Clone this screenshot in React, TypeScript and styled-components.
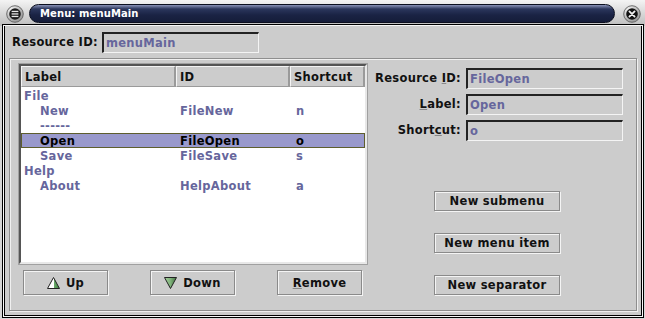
import styled, { createGlobalStyle } from "styled-components"

const GlobalStyle = createGlobalStyle`
    html, body {
        margin: 0;
        padding: 0;
        background: #cccccc;
    }
    * {
        box-sizing: border-box;
    }
`

interface MenuRow {
    label: string
    id: string
    shortcut: string
    depth: number
    selected?: boolean
}

const rows: MenuRow[] = [
    { label: "File", id: "", shortcut: "", depth: 0 },
    { label: "New", id: "FileNew", shortcut: "n", depth: 1 },
    { label: "------", id: "", shortcut: "", depth: 1 },
    { label: "Open", id: "FileOpen", shortcut: "o", depth: 1, selected: true },
    { label: "Save", id: "FileSave", shortcut: "s", depth: 1 },
    { label: "Help", id: "", shortcut: "", depth: 0 },
    { label: "About", id: "HelpAbout", shortcut: "a", depth: 1 },
]

function UpArrow() {
    return (
        <svg width="13" height="12" viewBox="0 0 13 12">
            <defs>
                <linearGradient id="upg" x1="0" x2="1" y1="0" y2="0">
                    <stop offset="0" stopColor="#ffffff" />
                    <stop offset="0.5" stopColor="#ffffff" />
                    <stop offset="0.5" stopColor="#6fae6f" />
                    <stop offset="1" stopColor="#3f7f3f" />
                </linearGradient>
            </defs>
            <polygon points="6.5,0.5 12.5,11.5 0.5,11.5" fill="url(#upg)" stroke="#222" strokeWidth="1" />
        </svg>
    )
}

function DownArrow() {
    return (
        <svg width="13" height="12" viewBox="0 0 13 12">
            <defs>
                <linearGradient id="dng" x1="0" x2="1" y1="0" y2="0">
                    <stop offset="0" stopColor="#a9d3a0" />
                    <stop offset="0.5" stopColor="#7fb27a" />
                    <stop offset="1" stopColor="#3f6f3f" />
                </linearGradient>
            </defs>
            <polygon points="0.5,0.5 12.5,0.5 6.5,11.5" fill="url(#dng)" stroke="#222" strokeWidth="1" />
        </svg>
    )
}

function MenuIcon() {
    return (
        <svg width="18" height="18" viewBox="0 0 18 18">
            <defs>
                <radialGradient id="ring" cx="0.35" cy="0.3" r="0.8">
                    <stop offset="0" stopColor="#ffffff" />
                    <stop offset="1" stopColor="#8a8a8a" />
                </radialGradient>
            </defs>
            <circle cx="9" cy="9" r="8.3" fill="url(#ring)" stroke="#555" strokeWidth="0.8" />
            <circle cx="9" cy="9" r="5.8" fill="#1a1a1a" />
            <rect x="5.6" y="5.8" width="6.8" height="1.3" fill="#e8e8e8" />
            <rect x="5.6" y="8.3" width="6.8" height="1.3" fill="#e8e8e8" />
            <rect x="5.6" y="10.8" width="6.8" height="1.3" fill="#e8e8e8" />
        </svg>
    )
}

function CloseIcon() {
    return (
        <svg width="18" height="18" viewBox="0 0 18 18">
            <defs>
                <radialGradient id="ring2" cx="0.35" cy="0.3" r="0.8">
                    <stop offset="0" stopColor="#ffffff" />
                    <stop offset="1" stopColor="#8a8a8a" />
                </radialGradient>
            </defs>
            <circle cx="9" cy="9" r="8.3" fill="url(#ring2)" stroke="#555" strokeWidth="0.8" />
            <circle cx="9" cy="9" r="5.8" fill="#111" />
            <path d="M6.4 6.4 L11.6 11.6 M11.6 6.4 L6.4 11.6" stroke="#f0f0f0" strokeWidth="1.8" strokeLinecap="round" />
        </svg>
    )
}

function App() {
    return (
        <>
            <GlobalStyle />
            <Window>
                <TitleBar>
                    <MenuIcon />
                    <TitlePill>Menu: menuMain</TitlePill>
                    <CloseIcon />
                </TitleBar>
                <Body>
                    <TopRow>
                        <Label>Resource ID:</Label>
                        <Field $width={157}>menuMain</Field>
                    </TopRow>
                    <Panel>
                        <LeftColumn>
                            <Table>
                                <HeaderRow>
                                    <HeaderCell>Label</HeaderCell>
                                    <HeaderCell>ID</HeaderCell>
                                    <HeaderCell>Shortcut</HeaderCell>
                                </HeaderRow>
                                {rows.map((row, i) => (
                                    <Row key={i} $selected={row.selected}>
                                        <Cell $indent={row.depth ? 19 : 3}>{row.label}</Cell>
                                        <Cell $indent={4}>{row.id}</Cell>
                                        <Cell $indent={6}>{row.shortcut}</Cell>
                                    </Row>
                                ))}
                            </Table>
                            <ButtonRow>
                                <Button $width={85} $height={25}>
                                    <UpArrow />
                                    <span>Up</span>
                                </Button>
                                <Button $width={85} $height={25}>
                                    <DownArrow />
                                    <span>Down</span>
                                </Button>
                                <Button $width={85} $height={25}>
                                    <span>
                                        <u>R</u>emove
                                    </span>
                                </Button>
                            </ButtonRow>
                        </LeftColumn>
                        <RightColumn>
                            <FieldGrid>
                                <FieldLabel>
                                    Resource <u>I</u>D:
                                </FieldLabel>
                                <Field $width={157}>FileOpen</Field>
                                <FieldLabel>
                                    <u>L</u>abel:
                                </FieldLabel>
                                <Field $width={157}>Open</Field>
                                <FieldLabel>
                                    Short<u>c</u>ut:
                                </FieldLabel>
                                <Field $width={157}>o</Field>
                            </FieldGrid>
                            <ActionStack>
                                <Button $width={126} $height={20}>New submenu</Button>
                                <Button $width={126} $height={20}>New menu item</Button>
                                <Button $width={126} $height={20}>New separator</Button>
                            </ActionStack>
                        </RightColumn>
                    </Panel>
                </Body>
            </Window>
        </>
    )
}

export default App

const font = `
    font-family: "DejaVu Sans", "Liberation Sans", sans-serif;
    font-weight: bold;
    font-size: 11.5px;
    letter-spacing: 0.3px;
`

const Window = styled.div`
    width: 645px;
    height: 319px;
    display: flex;
    flex-direction: column;
    background: linear-gradient(to bottom, #f4f4f4 0px, #bdbdbd 26px, #d6d6d6 26px);
    padding: 0 2px 2px 3px;
    ${font}
`

const TitleBar = styled.div`
    height: 26px;
    display: flex;
    align-items: center;
    gap: 5px;
    padding: 1px 2px 0 3px;
    flex-shrink: 0;
`

const TitlePill = styled.div`
    flex: 1;
    height: 19px;
    margin-right: 3px;
    border-radius: 10px;
    background: linear-gradient(to bottom, #8a93b8 0px, #2b365c 4px, #1a2344 10px, #141b36 19px);
    border: 1px solid #0b0f1f;
    color: #ffffff;
    font-size: 10px;
    letter-spacing: 0.1px;
    display: flex;
    align-items: center;
    padding-left: 10px;
    line-height: 1;
`

const Body = styled.div`
    flex: 1;
    display: flex;
    flex-direction: column;
    background: #cccccc;
    border: 1px solid #000;
    border-top: none;
    box-shadow: 0 0 0 1px #f8f8f8, 0 0 0 2px #000;
    margin: 0 1px 1px 1px;
    padding: 6px 4px 4px 4px;
`

const TopRow = styled.div`
    height: 20px;
    display: flex;
    align-items: center;
    gap: 4px;
    padding-left: 3px;
`

const Label = styled.span`
    color: #111;
`

const Field = styled.div<{ $width: number }>`
    width: ${(p) => p.$width}px;
    height: 21px;
    background: #cccccc;
    border-top: 2px solid #222;
    border-left: 2px solid #222;
    border-bottom: 1px solid #f4f4f4;
    border-right: 1px solid #f4f4f4;
    color: #66669c;
    display: flex;
    align-items: center;
    padding-left: 2px;
`

const Panel = styled.div`
    flex: 1;
    margin-top: 6px;
    display: flex;
    border: 1px solid #8e8e8e;
    box-shadow: inset 1px 1px 0 #f0f0f0, 1px 1px 0 #f0f0f0;
    padding: 5px 0 0 9px;
`

const LeftColumn = styled.div`
    width: 348px;
    display: flex;
    flex-direction: column;
    gap: 6px;
`

const Table = styled.div`
    height: 200px;
    background: #ffffff;
    border-top: 2px solid #555;
    border-left: 2px solid #555;
    border-right: 2px solid #e8e8e8;
    border-bottom: 2px solid #e8e8e8;
    outline: 1px solid #a0a0a0;
`

const HeaderRow = styled.div`
    display: grid;
    grid-template-columns: 155px 114px 75px;
    height: 21px;
    margin-bottom: 1px;
`

const HeaderCell = styled.div`
    background: #cccccc;
    color: #111;
    border-top: 1px solid #f4f4f4;
    border-left: 1px solid #f4f4f4;
    border-right: 2px solid #9a9a9a;
    border-bottom: 1px solid #9a9a9a;
    display: flex;
    align-items: center;
    padding-left: 3px;
`

const Row = styled.div<{ $selected?: boolean }>`
    display: grid;
    grid-template-columns: 155px 114px 75px;
    height: 15px;
    align-items: center;
    background: ${(p) => (p.$selected ? "#9999cc" : "transparent")};
    color: ${(p) => (p.$selected ? "#000" : "#66669c")};
    outline: ${(p) => (p.$selected ? "1px solid #5e5e2e" : "none")};
    outline-offset: -1px;
`

const Cell = styled.div<{ $indent: number }>`
    padding-left: ${(p) => p.$indent}px;
    white-space: nowrap;
`

const ButtonRow = styled.div`
    display: flex;
    justify-content: space-between;
    padding: 0 5px 0 4px;
`

const Button = styled.button<{ $width: number; $height: number }>`
    width: ${(p) => p.$width}px;
    height: ${(p) => p.$height}px;
    background: #cccccc;
    border: 1px solid #8a8a8a;
    box-shadow: inset 1px 1px 0 #f4f4f4, 1px 1px 0 #f4f4f4;
    color: #111;
    display: flex;
    align-items: center;
    justify-content: center;
    gap: 6px;
    padding: 0;
    ${font}

    u {
        text-decoration-color: #888;
    }
`

const RightColumn = styled.div`
    flex: 1;
    display: flex;
    flex-direction: column;
    padding-top: 4px;
`

const FieldGrid = styled.div`
    display: grid;
    grid-template-columns: 94px 157px;
    column-gap: 5px;
    row-gap: 5px;
`

const FieldLabel = styled.div`
    color: #111;
    text-align: right;
    line-height: 21px;
    white-space: nowrap;

    u {
        text-decoration-color: #888;
    }
`

const ActionStack = styled.div`
    display: flex;
    flex-direction: column;
    gap: 22px;
    margin-top: 50px;
    padding-left: 67px;
`
